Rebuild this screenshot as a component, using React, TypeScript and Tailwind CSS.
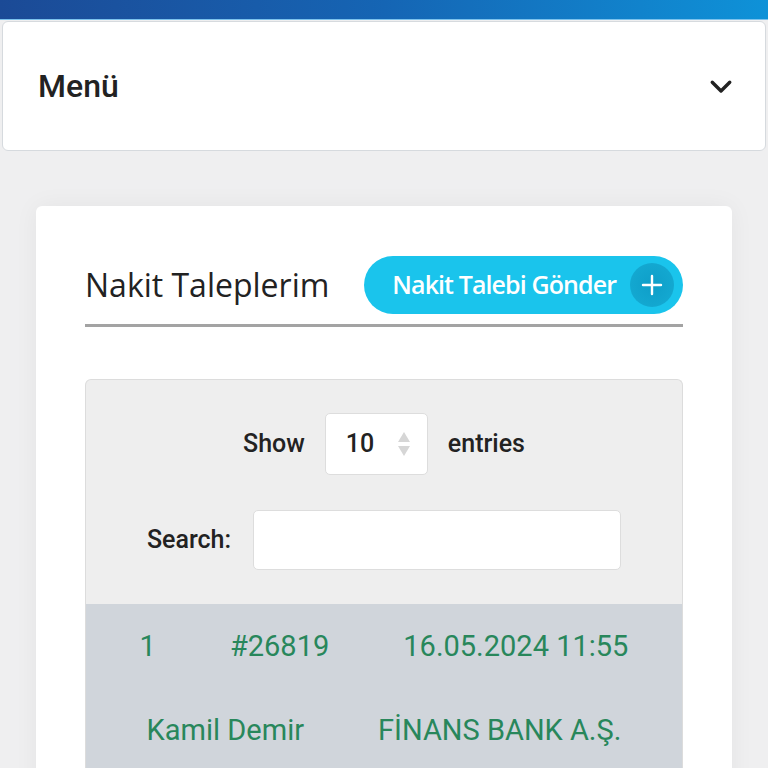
import React from 'react';

const rowCells = ['1', '#26819', '16.05.2024 11:55', 'Kamil Demir', 'FİNANS BANK A.Ş.'];

export default function App() {
  return (
    <div className="min-h-[768px] bg-[#efeff0] font-['Roboto',sans-serif] text-[#222]">
      {/* Top banner */}
      <div className="h-[20px] bg-gradient-to-r from-[#1b4a96] via-[#1565b4] to-[#0e92d8] border-b border-[#7cc3ee]" />

      {/* Menu */}
      <div className="mx-[2px] mt-px flex h-[130px] items-center justify-between rounded-md border border-[#d6dade] bg-white pl-[35px] pr-[29px]">
        <span className="text-[32px] font-medium text-[#222]">Menü</span>
        <svg width="30" height="30" viewBox="0 0 24 24" fill="none" stroke="#222" strokeWidth="2.7" strokeLinecap="round" strokeLinejoin="round">
          <path d="M5 9l7 7 7-7" />
        </svg>
      </div>

      {/* Content card */}
      <div className="mx-[36px] mt-[55px] rounded-md bg-white px-[49px] pt-[50px] pb-10 shadow-[0_0_24px_rgba(0,0,0,0.05)]">
        <div className="flex items-center gap-[35px]">
          <h2 className="w-[245px] whitespace-nowrap font-['Open_Sans',sans-serif] text-[32px] font-normal text-[#222]">
            Nakit Taleplerim
          </h2>
          <button className="flex h-[58px] w-[320px] items-center justify-between rounded-full bg-[#1ac4ec] pl-[28px] pr-[9px] text-white">
            <span className="font-['Open_Sans',sans-serif] text-[25px] font-semibold tracking-[-0.9px]">Nakit Talebi Gönder</span>
            <span className="flex h-[44px] w-[44px] items-center justify-center rounded-full bg-[radial-gradient(circle,#0f9ec8_0%,#15acd4_100%)]">
              <svg width="24" height="24" viewBox="0 0 24 24" fill="none" stroke="white" strokeWidth="2.4" strokeLinecap="round">
                <path d="M12 3v18M3 12h18" />
              </svg>
            </span>
          </button>
        </div>
        <div className="mt-[10px] h-[3px] bg-[#a3a3a3]" />

        {/* Table wrapper */}
        <div className="mt-[52px] overflow-hidden rounded-t-md border border-b-0 border-[#dcdcdc] bg-[#eeeeee]">
          <div className="flex items-center justify-center gap-[20px] pt-[33px]">
            <span className="text-[25px] font-medium">Show</span>
            <div className="flex h-[62px] w-[103px] items-center justify-between rounded-[5px] border border-[#dddddd] bg-white pl-[20px] pr-[16px]">
              <span className="text-[25px] font-medium">10</span>
              <svg width="14" height="26" viewBox="0 0 14 26" fill="#d6d6d6">
                <path d="M7 1l6 10H1z" />
                <path d="M7 25l6-10H1z" />
              </svg>
            </div>
            <span className="text-[25px] font-medium">entries</span>
          </div>
          <div className="mt-[35px] flex items-center justify-center gap-[22px]">
            <span className="text-[25px] font-medium">Search:</span>
            <div className="h-[60px] w-[368px] rounded-[5px] border border-[#dddddd] bg-white" />
          </div>
          <div className="mt-[34px] flex flex-wrap justify-center bg-[#d0d5db] text-[#28875b]">
            {rowCells.map((c) => (
              <div key={c} className="px-[37px] py-[22px] text-[29px] leading-[40px]">
                {c}
              </div>
            ))}
          </div>
        </div>
      </div>
    </div>
  );
}
